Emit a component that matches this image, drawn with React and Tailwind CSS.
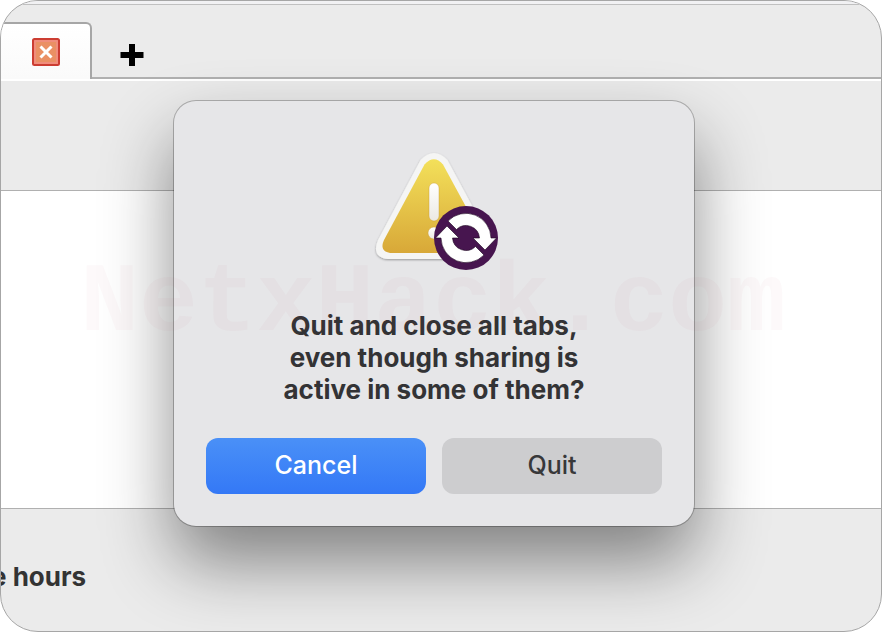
import React from 'react';

const CloseIcon = () => (
  <svg viewBox="0 0 28 28" className="w-7 h-7">
    <rect x="1" y="1" width="26" height="26" rx="1.5" fill="#f08d7c" stroke="#cc3d32" strokeWidth="2" />
    <rect x="4" y="4" width="20" height="20" fill="#ea9064" />
    <path d="M8.5 8.5 L19.5 19.5 M19.5 8.5 L8.5 19.5" stroke="#fff" strokeWidth="3" />
  </svg>
);

const PlusIcon = () => (
  <svg viewBox="0 0 24 24" className="w-6 h-6">
    <path d="M9 1h6v8h8.500v6H15v8H9v-8H.5V9H9z" fill="#000" />
  </svg>
);

const WarningIcon = () => (
  <svg viewBox="0 0 128 124" className="w-32 h-31" role="img" aria-label="Warning">
    <defs>
      <linearGradient id="warningFill" x1="0" y1="0" x2="0" y2="1">
        <stop offset="0" stopColor="#f3e05a" />
        <stop offset="1" stopColor="#d8a838" />
      </linearGradient>
      <linearGradient id="markFill" x1="0" y1="0" x2="0" y2="1">
        <stop offset="0" stopColor="#ffffff" />
        <stop offset="1" stopColor="#ebe9e2" />
      </linearGradient>
      <filter id="warningShadow" x="-10%" y="-10%" width="120%" height="120%">
        <feDropShadow dx="0" dy="1" stdDeviation="1.2" floodOpacity="0.35" />
      </filter>
    </defs>
    <path
      d="M50.5 11 Q64 -3 77.500 11 L120 90 Q128 109 109 110 H18 Q1 108 8 91 Z"
      fill="#f5f5f4"
      filter="url(#warningShadow)"
    />
    <path
      d="M54.500 15.500 Q64 5 73 15.500 L114 91 Q119 102 107 104 H20 Q9 102 14 91 Z"
      fill="url(#warningFill)"
    />
    <g fill="url(#markFill)" stroke="#c99a2c" strokeOpacity="0.5" strokeWidth="0.8">
      <rect x="59" y="34" width="10" height="38" rx="5" />
      <circle cx="64" cy="84" r="6" />
    </g>
    <circle cx="96" cy="89" r="32" fill="#47154f" />
    <g fill="#fff" stroke="#1b031f" strokeWidth="0.6">
      <path d="M78 72 A25 25 0 0 1 121 89 H126.500 L115 101 L103 89 H109.500 A13.500 13.500 0 0 0 86.500 80.500 Z" />
      <path d="M78 72 A25 25 0 0 1 121 89 H126.500 L115 101 L103 89 H109.500 A13.500 13.500 0 0 0 86.500 80.500 Z" transform="rotate(180 96 89)" />
    </g>
  </svg>
);

const QuitDialog = () => (
  <div
    role="alertdialog"
    aria-labelledby="quit-title"
    className="w-[520px] rounded-[22px] bg-[#e6e6e8] px-8 pt-12 pb-8 flex flex-col items-center shadow-[0_0_0_1px_rgba(0,0,0,0.25),0_36px_70px_rgba(0,0,0,0.45)]"
  >
    <WarningIcon />
    <h1 id="quit-title" className="mt-[37px] w-80 text-center text-[26px] leading-8 font-bold text-[#333335]">
      Quit and close all tabs, even though sharing is active in some of them?
    </h1>
    <div className="mt-8 w-full grid grid-cols-2 gap-4 text-[25px] font-medium">
      <button type="button" className="h-14 rounded-xl bg-linear-to-b from-[#4a90f7] to-[#3478f6] text-white">
        Cancel
      </button>
      <button type="button" className="h-14 rounded-xl bg-[#cdcdcf] text-[#38383a]">
        Quit
      </button>
    </div>
  </div>
);

const App = () => {
  return (
    <div className="min-h-screen bg-white flex font-['Inter',sans-serif]">
      <div className="relative flex-1 flex flex-col overflow-hidden rounded-[38px] border border-[#a6a6a6] bg-[#ebebeb]">
        <div className="h-1 bg-[#f1f1f3] border-b border-[#c0c0c0]" />

        {/* Tab bar */}
        <div className="h-[76px] pt-[17px] flex border-b-2 border-white">
          <div className="w-[91px] pl-[31px] flex items-center rounded-tr-md border-t-2 border-r-2 border-[#a6a6a6] bg-linear-to-b from-white to-[#fafafa]">
            <button type="button" aria-label="Close tab">
              <CloseIcon />
            </button>
          </div>
          <div className="flex-1 -mt-[17px] pt-3 pl-7 flex items-center border-b-2 border-[#b0b0b0]">
            <button type="button" aria-label="New tab" className="pt-4">
              <PlusIcon />
            </button>
          </div>
        </div>

        {/* Toolbar, content and footer */}
        <div className="h-[110px] border-b border-[#b0b0b0]" />
        <main className="flex-1 bg-white" />
        <footer className="h-[123px] pt-13 border-t border-[#b0b0b0] text-[26px] leading-8 font-bold text-[#333333]">
          <p className="-ml-2.5">e hours</p>
        </footer>

        {/* Modal layer */}
        <div className="absolute inset-0 pt-[100px] pr-3.5 flex items-start justify-center">
          <QuitDialog />
        </div>
        <div className="absolute inset-x-0 top-[248px] pr-4 text-center font-['Liberation_Mono',monospace] text-[98px] leading-[110px] font-bold text-[#c04060]/3 pointer-events-none">
          NetxHack.com
        </div>
      </div>
    </div>
  );
};

export default App;
